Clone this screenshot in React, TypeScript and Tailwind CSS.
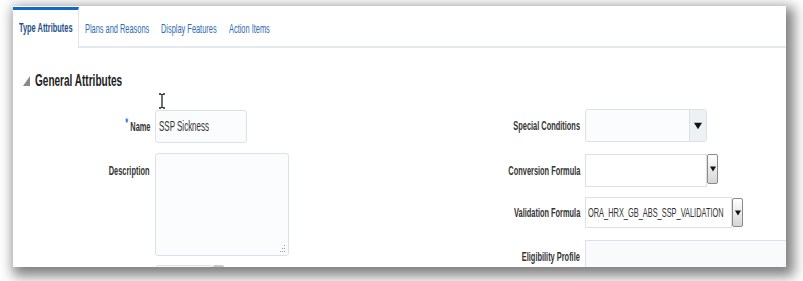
import React from "react";

const FONT = { fontFamily: '"Liberation Sans", Arial, sans-serif' };

function Tri({ size = 7 }: { size?: number }) {
  return (
    <svg width={size} height={size} viewBox="0 0 10 10">
      <polygon points="0,1 10,1 5,9" fill="#111" />
    </svg>
  );
}

export default function App() {
  return (
    <div className="w-[803px] h-[281px] bg-white pl-[13px] pt-[6px] overflow-hidden" style={FONT}>
      <div className="relative w-[773px] h-[261px] bg-white overflow-hidden shadow-[4px_5px_12px_4px_rgba(0,0,0,0.5)]">
        {/* Tabs */}
        <div className="flex h-[42px] border-b-2 border-[#e3e9ef]">
          <div className="shrink-0 self-start mt-[1px] h-[41px] w-[66px] border-t-[3px] border-t-[#0f6cc4] border-r border-r-[#dfe5eb] bg-white pl-[6px] pb-[2px] flex items-center">
            <span className="inline-block origin-left scale-x-[0.57] whitespace-nowrap text-[13px] font-bold text-[#1d4f8b]">
              Type Attributes
            </span>
          </div>
          <div className="shrink-0 h-full pt-[4px] px-[6px] flex items-center">
            <div className="w-[64px]">
              <span className="inline-block origin-left scale-x-[0.57] whitespace-nowrap text-[13px] text-[#2b6cb3]">
                Plans and Reasons
              </span>
            </div>
          </div>
          <div className="shrink-0 h-full pt-[4px] px-[6px] flex items-center">
            <div className="w-[56px]">
              <span className="inline-block origin-left scale-x-[0.57] whitespace-nowrap text-[13px] text-[#2b6cb3]">
                Display Features
              </span>
            </div>
          </div>
          <div className="shrink-0 h-full pt-[4px] px-[6px] flex items-center">
            <div className="w-[40px]">
              <span className="inline-block origin-left scale-x-[0.57] whitespace-nowrap text-[13px] text-[#2b6cb3]">
                Action Items
              </span>
            </div>
          </div>
        </div>

        {/* Heading */}
        <div className="mt-[23px] h-[20px] flex items-center pl-[10px] gap-[5px]">
          <svg width="7" height="10" viewBox="0 0 7 10">
            <polygon points="7,0 7,10 0,10" fill="#8a8a8a" />
          </svg>
          <span className="inline-block origin-left scale-x-[0.59] whitespace-nowrap text-[17px] font-bold text-[#222]">
            General Attributes
          </span>
        </div>

        {/* Form */}
        <div className="mt-[18px] flex">
          {/* Left group */}
          <div className="shrink-0 w-[430px] flex flex-col">
            <div className="mt-[1px] flex h-[33px]">
              <div className="shrink-0 w-[137px] flex justify-end items-center">
                <span className="inline-block origin-right scale-x-[0.57] whitespace-nowrap text-[13px] font-bold text-[#333]">
                  <span className="relative -top-[4px] mr-[4px] text-[#1c6ec4]">*</span>Name
                </span>
              </div>
              <div className="shrink-0 ml-[5px] w-[92px] h-[33px] border border-[#dbe1e7] rounded-[3px] bg-[#fbfcfd] pl-[3px] flex items-center">
                <span className="inline-block origin-left scale-x-[0.57] whitespace-nowrap text-[14px] text-[#333]">
                  SSP Sickness
                </span>
              </div>
            </div>
            <div className="mt-[10px] flex">
              <div className="shrink-0 w-[137px] flex justify-end pt-[10px]">
                <span className="inline-block origin-right scale-x-[0.57] whitespace-nowrap text-[13px] leading-[16px] font-bold text-[#333]">
                  Description
                </span>
              </div>
              <div className="shrink-0 relative ml-[5px] w-[134px] h-[103px] border border-[#dbe1e7] rounded-[3px] bg-[#fbfcfd]">
                <svg className="absolute right-[2px] bottom-[2px]" width="6" height="8" viewBox="0 0 6 8">
                  <rect x="4" y="0" width="1" height="1" fill="#999" />
                  <rect x="2" y="3" width="1" height="1" fill="#999" />
                  <rect x="4" y="3" width="1" height="1" fill="#999" />
                  <rect x="0" y="6" width="1" height="1" fill="#999" />
                  <rect x="2" y="6" width="1" height="1" fill="#999" />
                  <rect x="4" y="6" width="1" height="1" fill="#999" />
                </svg>
              </div>
            </div>
            <div className="mt-[9px] flex pl-[142px]">
              <div className="shrink-0 w-[58px] h-[20px] border border-[#dbe1e7] rounded-[3px] bg-[#fbfcfd]" />
              <div className="shrink-0 w-[11px] h-[20px] bg-[#c9c9c9] rounded-[2px]" />
            </div>
          </div>

          {/* Right group */}
          <div className="shrink-0 flex flex-col">
            <div className="flex h-[33px]">
              <div className="shrink-0 w-[137px] flex justify-end items-center">
                <span className="inline-block origin-right scale-x-[0.57] whitespace-nowrap text-[13px] font-bold text-[#333]">
                  Special Conditions
                </span>
              </div>
              <div className="shrink-0 ml-[5px] w-[122px] h-[33px] border border-[#dbe1e7] rounded-[3px] bg-[#fbfcfd] flex overflow-hidden">
                <div className="flex-1" />
                <div className="w-[17px] h-full bg-[#eef1f4] border-l border-[#dbe1e7] flex items-center justify-center">
                  <Tri size={8} />
                </div>
              </div>
            </div>
            <div className="mt-[12px] flex h-[33px]">
              <div className="shrink-0 w-[137px] flex justify-end items-center">
                <span className="inline-block origin-right scale-x-[0.57] whitespace-nowrap text-[13px] font-bold text-[#333]">
                  Conversion Formula
                </span>
              </div>
              <div className="shrink-0 ml-[5px] w-[122px] h-[33px] border border-[#dbe1e7] bg-white" />
              <div className="shrink-0 self-start w-[11px] h-[30px] border border-[#8a8a8a] rounded-[2px] bg-linear-to-b from-white to-[#d6d6d6] flex items-center justify-center">
                <Tri size={6} />
              </div>
            </div>
            <div className="mt-[10px] flex h-[31px]">
              <div className="shrink-0 w-[137px] flex justify-end items-center">
                <span className="inline-block origin-right scale-x-[0.57] whitespace-nowrap text-[13px] font-bold text-[#333]">
                  Validation Formula
                </span>
              </div>
              <div className="shrink-0 ml-[5px] w-[147px] h-[31px] border border-[#dbe1e7] bg-white pl-[2px] flex items-center">
                <span className="inline-block origin-left scale-x-[0.57] whitespace-nowrap text-[13px] text-[#333]">
                  ORA_HRX_GB_ABS_SSP_VALIDATION
                </span>
              </div>
              <div className="shrink-0 self-start mt-[1px] w-[11px] h-[29px] border border-[#8a8a8a] rounded-[2px] bg-linear-to-b from-white to-[#d6d6d6] flex items-center justify-center">
                <Tri size={6} />
              </div>
            </div>
            <div className="mt-[12px] flex h-[33px]">
              <div className="shrink-0 w-[137px] flex justify-end items-center">
                <span className="inline-block origin-right scale-x-[0.57] whitespace-nowrap text-[13px] font-bold text-[#333]">
                  Eligibility Profile
                </span>
              </div>
              <div className="shrink-0 ml-[5px] w-[220px] h-[40px] border border-[#dbe1e7] bg-[#f9fafc]" />
            </div>
          </div>
        </div>

        {/* I-beam cursor */}
        <svg className="absolute left-[145px] top-[87px]" width="8" height="16" viewBox="0 0 8 16">
          <path d="M1 1 H3 M5 1 H7 M4 1 V15 M1 15 H3 M5 15 H7 M3 1.5 L4 2 L5 1.5 M3 14.5 L4 14 L5 14.5" stroke="#222" strokeWidth="1.3" fill="none" />
        </svg>
      </div>
    </div>
  );
}
